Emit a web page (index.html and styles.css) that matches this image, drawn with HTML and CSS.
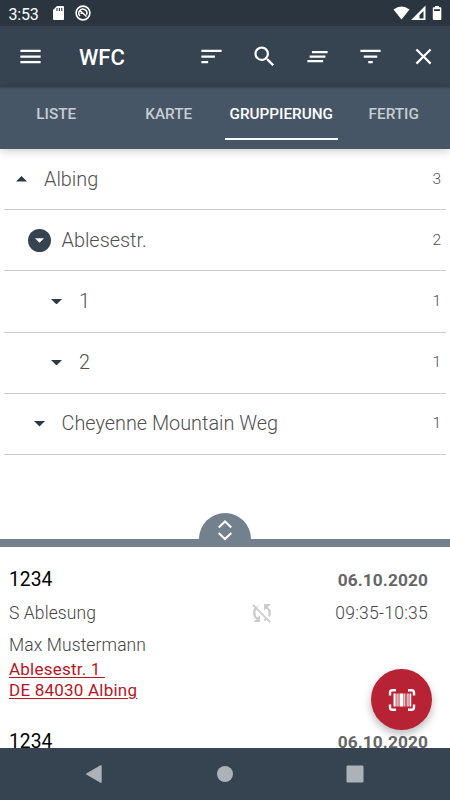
FILE: index.html
```html
<!DOCTYPE html>
<html lang="de">
<head>
<meta charset="utf-8">
<title>WFC</title>
<link rel="stylesheet" href="styles.css">
</head>
<body>
<div class="screen">
  <header class="status">
    <span class="clock">3:53</span>
    <svg class="sd" viewBox="0 0 11 14"><path fill="#fff" d="M4 0h6q1 0 1 1v12q0 1-1 1H1q-1 0-1-1V4z"/><path stroke="#2b353f" stroke-width="1.1" d="M4 2v3M6.4 2v3M8.8 2v3"/></svg>
    <svg class="sync" viewBox="0 0 16 16" fill="none" stroke="#fff"><circle cx="8" cy="8" r="6.900" stroke-width="1.600"/><path stroke-width="1.500" d="M5 11A4 4 0 1 1 11.500 9.800M5 5.500l6.500 6M5.500 8.200h3"/></svg>
    <svg class="signals" viewBox="0 0 50 16"><path fill="#fff" d="M.5 4.600Q8.500-1.600 16.500 4.600L8.500 14.500z"/><path fill="#fff" fill-rule="evenodd" d="M18 15L32.500.5V15zM26.500 13.500h4V6l-4 4z"/><path fill="#fff" d="M42 1h4v1.300h1.500q.8 0 .8.800V14q0 1-1 1h-6.500q-1 0-1-1V3.100q0-.8.800-.8H42z"/><path fill="#2b353f" d="M41 4.200h6v1.800h-6z"/></svg>
  </header>
  <nav class="toolbar">
    <svg class="icon menu" viewBox="0 0 24 24"><path d="M3 18h18v-2H3v2zm0-5h18v-2H3v2zm0-7v2h18V6H3z"/></svg>
    <h1>WFC</h1>
    <div class="actions">
      <svg class="icon" viewBox="0 0 24 24"><path d="M3 18h6v-2H3v2zM3 6v2h18V6H3zm0 7h12v-2H3v2z"/></svg>
      <svg class="icon" viewBox="0 0 24 24"><path d="M15.500 14h-.79l-.28-.27A6.471 6.471 0 0 0 16 9.500 6.500 6.500 0 1 0 9.500 16c1.610 0 3.090-.59 4.230-1.570l.27.28v.79l5 4.990L20.490 19l-4.990-5zm-6 0C7.010 14 5 11.990 5 9.500S7.010 5 9.500 5 14 7.010 14 9.500 11.990 14 9.500 14z"/></svg>
      <svg class="icon" viewBox="0 0 24 24"><path d="M5 13h14v-2H5v2zm-2 4h14v-2H3v2zM7 7v2h14V7H7z"/></svg>
      <svg class="icon" viewBox="0 0 24 24"><path d="M10 18h4v-2h-4v2zM3 6v2h18V6H3zm3 7h12v-2H6v2z"/></svg>
      <svg class="icon" viewBox="0 0 24 24"><path d="M19 6.410L17.590 5 12 10.590 6.410 5 5 6.410 10.590 12 5 17.590 6.410 19 12 13.410 17.590 19 19 17.590 13.410 12z"/></svg>
    </div>
  </nav>
  <div class="tabs">
    <span>LISTE</span><span>KARTE</span><span class="active">GRUPPIERUNG</span><span>FERTIG</span>
  </div>
  <main class="tree">
    <div class="row level0"><i class="toggle"><svg viewBox="0 0 10 5"><path d="M0 5L5 0l5 5z"/></svg></i><span class="label">Albing</span><span class="count">3</span></div>
    <div class="row level1"><i class="toggle disc"><svg viewBox="0 0 10 5"><path d="M0 0h10L5 5z"/></svg></i><span class="label">Ablesestr.</span><span class="count">2</span></div>
    <div class="row level2"><i class="toggle"><svg viewBox="0 0 10 5"><path d="M0 0h10L5 5z"/></svg></i><span class="label">1</span><span class="count">1</span></div>
    <div class="row level2"><i class="toggle"><svg viewBox="0 0 10 5"><path d="M0 0h10L5 5z"/></svg></i><span class="label">2</span><span class="count">1</span></div>
    <div class="row level1"><i class="toggle"><svg viewBox="0 0 10 5"><path d="M0 0h10L5 5z"/></svg></i><span class="label">Cheyenne Mountain Weg</span><span class="count">1</span></div>
  </main>
  <div class="divider">
    <svg viewBox="0 0 52 26"><path fill="#73818f" d="M0 26a26 26 0 0 1 52 0z"/><path fill="none" stroke="#fff" stroke-width="2" d="M19.700 14.500L26 8.500l6.300 6M19.700 20L26 26l6.300-6"/></svg>
  </div>
  <section class="orders">
    <article>
      <div class="line head"><span class="number">1234</span><b>06.10.2020</b></div>
      <div class="line kind"><span class="task">S Ablesung</span>
        <svg class="off" viewBox="0 0 20 20"><path fill="none" stroke="#ccc" stroke-width="2.300" d="M6.500 3Q2.200 5 2.200 9.500q0 4 3 6.300M13.500 3.700q4.300 2.300 4.300 6.300 0 2-1 3.500M12 17q1-.3 1.800-.8"/><path fill="#ccc" d="M12 1h7l-7 6.500zM1.500 19H8v-7z"/><path stroke="#fff" stroke-width="1.500" d="M2.500 .5l17.500 17.500"/><path stroke="#ccc" stroke-width="1.900" d="M1 2l17.300 17.300"/></svg>
        <span class="time">09:35-10:35</span></div>
      <p class="name">Max Mustermann</p>
      <a class="address"><span>Ablesestr. 1 </span><br><span>DE 84030 Albing</span></a>
    </article>
    <article>
      <div class="line head"><span class="number">1234</span><b>06.10.2020</b></div>
    </article>
  </section>
  <button class="scan" aria-label="Scan"><svg viewBox="0 0 28 24"><path fill="none" stroke="#fff" stroke-width="2.400" d="M8 2.200H4.500Q2 2.200 2 4.700V7.500M20 2.200h3.500Q26 2.200 26 4.700V7.500M8 21.800H4.500Q2 21.800 2 19.300V16.500M20 21.800h3.500q2.500 0 2.500-2.500V16.500"/><path fill="#fff" d="M5.500 5.500h2.200v13H5.500zM11.500 5.500h4v13h-4zM16.300 5.500h1v13h-1zM21.500 5.500h1.700v13h-1.700z"/><path fill="#fff" opacity=".65" d="M8.300 5.500h2.500v13H8.300zM18.500 5.500h2.400v13h-2.400z"/></svg></button>
  <footer class="system">
    <svg viewBox="0 0 18 18"><path d="M1.700 8.200L15.500.3q1.200-.5 1.200.8v15.800q0 1.300-1.200.8L1.700 9.800q-1.300-.8 0-1.600z"/></svg>
    <svg viewBox="0 0 18 18"><circle cx="9" cy="9" r="8"/></svg>
    <svg viewBox="0 0 18 18"><rect x=".5" y=".5" width="17" height="17" rx="1.200"/></svg>
  </footer>
</div>
</body>
</html>
```
FILE: styles.css
```css
* { box-sizing: border-box; }
body { margin: 0; font-family: Roboto, "Liberation Sans", sans-serif; }
svg { display: block; flex: none; }
.screen { position: relative; width: 450px; height: 800px; overflow: hidden; display: flex; flex-direction: column; background: #fff; }

.status { height: 26px; flex: none; display: flex; align-items: center; background: #2b353f; color: #fff; padding: 0 0 0 8.500px; }
.clock { font-size: 16px; width: 44px; letter-spacing: -.2px; padding-top: 2px; }
.sd { width: 11px; height: 14px; }
.sync { width: 16px; height: 16px; margin-left: 11px; }
.signals { width: 50px; height: 16px; margin: 0 7px 0 auto; }

.toolbar { height: 61px; flex: none; display: flex; align-items: center; background: #364350; padding: 0 13px 0 17px; }
.icon { width: 27px; height: 27px; fill: #fff; }
.toolbar h1 { margin: 0 0 0 35px; padding-top: 2px; color: #fff; font-size: 22px; font-weight: 500; }
.actions { margin-left: auto; display: flex; gap: 26px; }

.tabs { height: 62px; flex: none; display: grid; grid-template-columns: repeat(4, 112.500px); background: #465667; box-shadow: 0 2px 9px rgba(0,0,0,.2), inset 0 3px 2px -2px #364350; z-index: 1; }
.tabs span { height: 53px; padding-top: 1px; line-height: 52px; text-align: center; color: #c8cdd1; font-size: 15.300px; font-weight: 500; }
.tabs .active { color: #fff; border-bottom: 2px solid #fff; }

.tree { height: 390px; flex: none; padding: 0 4px; }
.row { height: 61.200px; display: flex; align-items: center; border-bottom: 1px solid #ccc; color: #505050; padding-right: 5px; }
.level0 { padding-left: 6px; }
.level1 { padding-left: 23.500px; }
.level2 { padding-left: 41px; }
.toggle { width: 23px; height: 23px; display: flex; align-items: center; justify-content: center; fill: #2c3a48; }
.toggle svg { width: 11px; height: 5.500px; }
.disc { border-radius: 50%; background: #364350; fill: #fff; }
.disc svg { width: 9px; height: 5px; }
.label { margin: 0 0 0 11px; font-size: 19.850px; font-weight: 300; }
.count { margin: -1px 0 0 auto; font-size: 15.500px; font-weight: 300; }

.divider { height: 8px; flex: none; position: relative; background: #73818f; }
.divider svg { position: absolute; left: 199px; bottom: 8px; width: 52px; height: 26px; overflow: visible; }

.orders { flex: 1; min-height: 0; overflow: hidden; padding: 0 22px 0 9px; }
article { height: 162px; padding-top: 20px; }
.line { display: flex; justify-content: space-between; align-items: center; height: 24px; }
.number { font-size: 19.300px; }
.head b { font-size: 17.300px; letter-spacing: .1px; font-weight: 700; color: #666; padding-top: 2px; }
.kind { margin-top: 10px; font-size: 17.500px; font-weight: 300; color: #444; display: grid; grid-template-columns: 243px 20px 1fr; }
.task, .name { letter-spacing: .1px; }
.off { width: 20px; height: 20px; }
.time { text-align: right; letter-spacing: .25px; }
.name { margin: 9px 0 0; line-height: 23px; font-size: 17.500px; font-weight: 300; color: #444; }
.address { display: block; margin-top: 2px; color: #ba1424; font-size: 17px; letter-spacing: .22px; line-height: 20.500px; white-space: pre; text-decoration: underline; text-decoration-thickness: 1px; text-underline-offset: 2px; }

.scan { position: absolute; left: 371px; top: 669px; width: 61px; height: 61px; border: 0; border-radius: 50%; padding: 0; display: grid; place-items: center; background: #b72335; box-shadow: 0 4px 8px rgba(0,0,0,.28); }
.scan svg { width: 28px; height: 24px; }

.system { height: 52px; flex: none; display: flex; justify-content: space-between; align-items: center; padding: 0 86px 0 85px; background: #364350; fill: #adb2b9; }
.system svg { width: 18px; height: 18px; }
```
